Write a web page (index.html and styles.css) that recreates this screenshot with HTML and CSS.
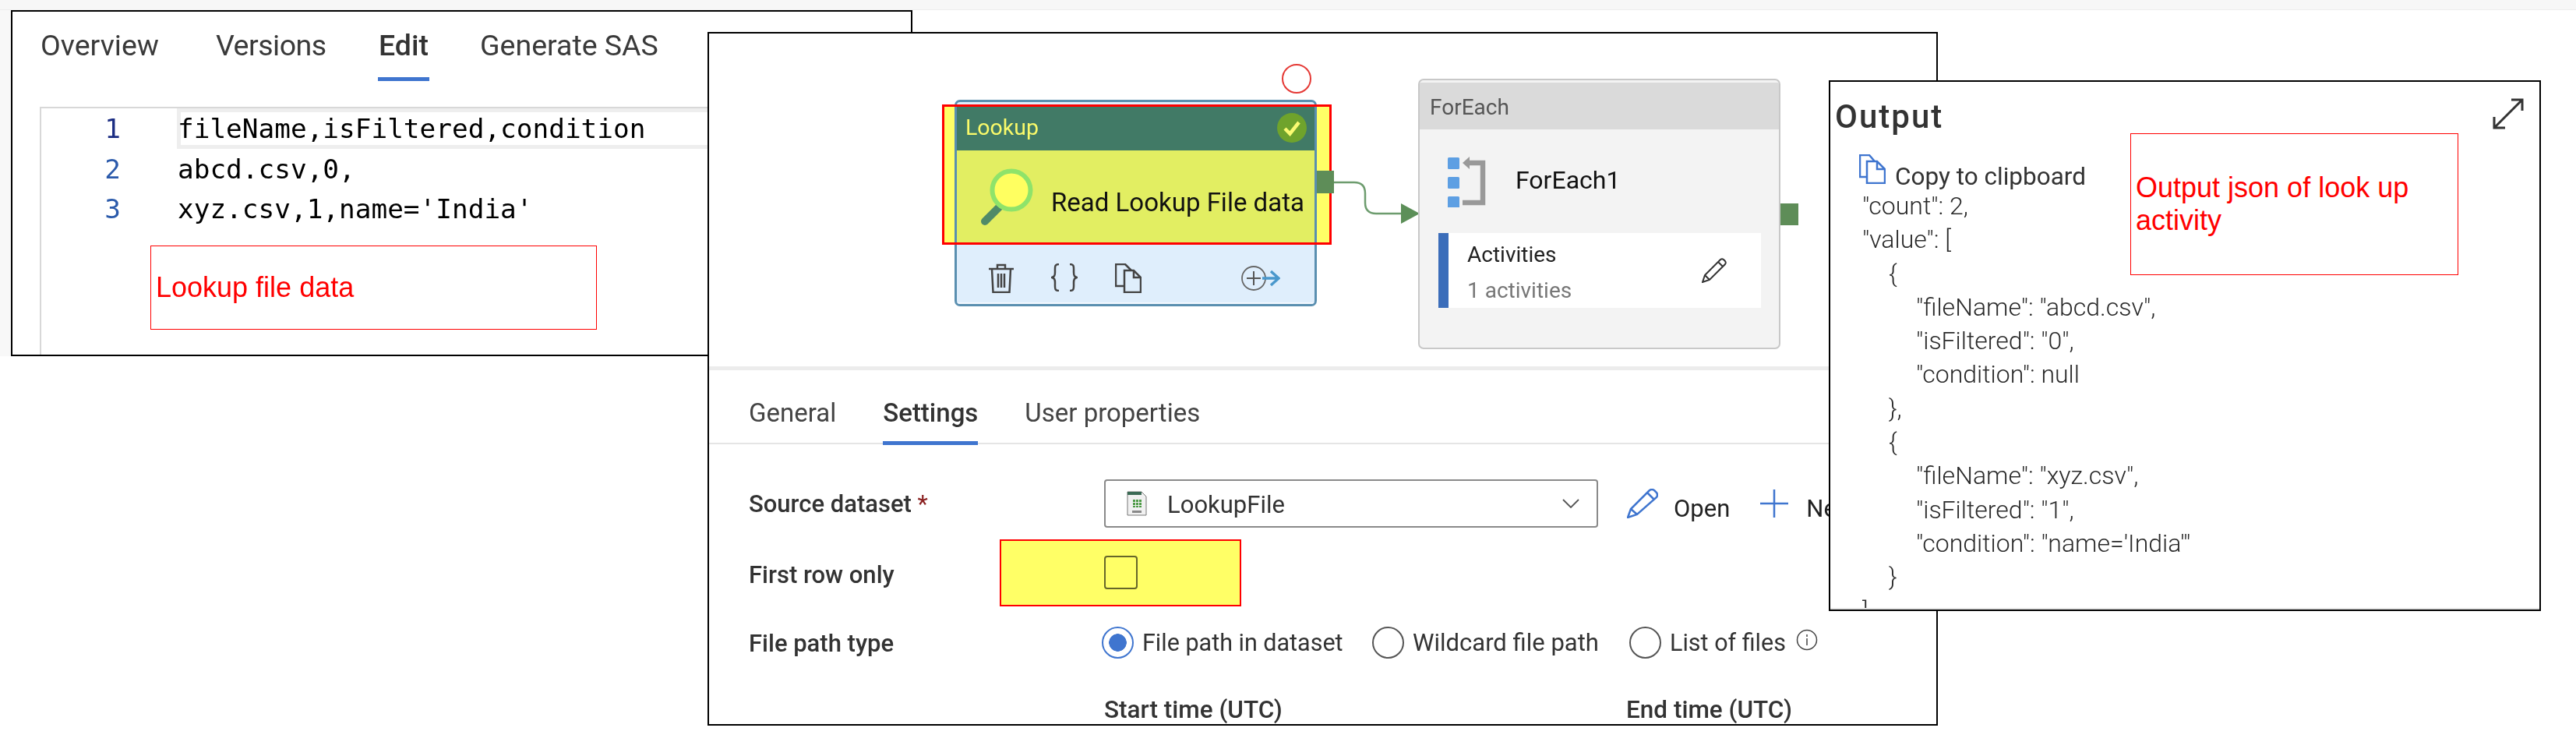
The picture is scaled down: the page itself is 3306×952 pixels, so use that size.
FILE: index.html
```html
<!DOCTYPE html>
<html lang="en">
<head>
<meta charset="utf-8">
<title>Lookup activity</title>
<link rel="stylesheet" href="styles.css">
</head>
<body>
<div class="page">
  <div class="topbar"></div>
  <div class="leftbar"></div>

  <section class="win win-file">
    <nav class="file-tabs">
      <span class="ftab ftab-a">Overview</span>
      <span class="ftab ftab-b">Versions</span>
      <span class="ftab ftab-on">Edit</span>
      <span class="ftab">Generate SAS</span>
    </nav>
    <div class="editor">
      <div class="line"><span class="num num-cur">1</span><span class="code code-cur">fileName,isFiltered,condition</span></div>
      <div class="line"><span class="num">2</span><span class="code">abcd.csv,0,</span></div>
      <div class="line"><span class="num">3</span><span class="code">xyz.csv,1,name='India'</span></div>
    </div>
  </section>
  <div class="note note-file">Lookup file data</div>

  <section class="win win-main">
    <div class="canvas">
      <div class="hl-fill"></div>
      <div class="ring"></div>

      <div class="node node-lookup">
        <div class="nl-strip"></div>
        <div class="nl-head">
          <span>Lookup</span>
          <svg class="nl-check" viewBox="0 0 38 38"><circle cx="19" cy="19" r="19" fill="#6fa32c"/><path d="M10 20l6.500 6.500L28 12" fill="none" stroke="#fbfb72" stroke-width="4.500"/></svg>
        </div>
        <div class="nl-body">
          <svg class="nl-glass" viewBox="0 0 72 76"><path d="M28 49L8 69" stroke="#4f8a68" stroke-width="10" stroke-linecap="round"/><circle cx="42" cy="29" r="24.500" fill="#ffff60" stroke="#8fe36a" stroke-width="6"/></svg>
          <span class="nl-name">Read Lookup File data</span>
        </div>
        <div class="nl-foot">
          <svg class="ic-trash" viewBox="0 0 32 38" fill="none" stroke="#444" stroke-width="2.500"><path d="M0 7h32M11 7V2h10v5M4 7l1.500 30h21L28 7M12 13v18M16 13v18M20 13v18"/></svg>
          <svg class="ic-brace" viewBox="0 0 34 36" fill="none" stroke="#444" stroke-width="2.500"><path d="M10 1C4 1 5 5 5 11c0 5-1 6-4 7 3 1 4 2 4 7 0 6-1 10 5 10M24 1c6 0 5 4 5 10 0 5 1 6 4 7-3 1-4 2-4 7 0 6 1 10-5 10"/></svg>
          <svg class="ic-copy" viewBox="0 0 34 38" fill="none" stroke="#444" stroke-width="2.500"><path d="M12 29H1V1h12l8 8M12 9h12l9 9v19H12zM24 9v9h9" /></svg>
          <svg class="ic-add" viewBox="0 0 50 32" fill="none"><circle cx="16" cy="16" r="15" stroke="#666" stroke-width="1.800"/><path d="M7 16h18M16 7v18" stroke="#555" stroke-width="2"/><path d="M27 16h20M38 7l10 9-10 9" stroke="#4a98cc" stroke-width="3.500"/></svg>
        </div>
      </div>
      <div class="hl-frame"></div>
      <div class="port port-a"></div>

      <svg class="wire" viewBox="0 0 112 60" fill="none"><path d="M0 3h26q14 0 14 14v12q0 14 14 14h36" stroke="#6d9c6e" stroke-width="2.500"/><path d="M86 30l24 13-24 13z" fill="#5c8f58"/></svg>

      <div class="node node-each">
        <div class="ne-head">ForEach</div>
        <div class="ne-main">
          <svg class="ne-loop" viewBox="0 0 50 66" fill="none"><rect x="0" y="2" width="15" height="15" rx="1.500" fill="#5d9fe3"/><rect x="0" y="27" width="15" height="15" rx="1.500" fill="#5d9fe3"/><rect x="0" y="52" width="15" height="15" rx="1.500" fill="#5d9fe3"/><path d="M26 9h19v51H19" stroke="#999" stroke-width="6.500"/><path d="M19 9l9-8v16z" fill="#999"/></svg>
          <span class="ne-name">ForEach1</span>
        </div>
        <div class="ne-box">
          <div class="ne-text">
            <div class="ne-t1">Activities</div>
            <div class="ne-t2">1 activities</div>
          </div>
          <svg class="ne-pen" viewBox="0 0 32 32" fill="none" stroke="#333" stroke-width="2"><path d="M1 31l3-9L24 2q2-1.500 4 0l2 2q1.500 2 0 4L10 28zM4 22l6 6M21 5l6 6"/></svg>
        </div>
      </div>
      <div class="port port-b"></div>
    </div>

    <div class="band"></div>

    <nav class="main-tabs">
      <span class="mtab">General</span>
      <span class="mtab mtab-on">Settings</span>
      <span class="mtab">User properties</span>
    </nav>

    <div class="form">
      <div class="row row-source">
        <label class="lab">Source dataset <span class="star">*</span></label>
        <div class="select">
          <svg class="csv" viewBox="0 0 26 32"><path d="M1 1h18l6 6v24H1z" fill="#f1f1f1" stroke="#777"/><path d="M1 1h18v4H1z" fill="#3b6a55"/><path d="M8 11h3v3H8zm4 0h3v3h-3zm4 0h3v3h-3zM8 15h3v3H8zm4 0h3v3h-3zm4 0h3v3h-3zM8 19h3v2H8zm4 0h3v2h-3zm4 0h3v2h-3z" fill="#4c9a45"/><path d="M7 25h12v3H7z" fill="#888"/></svg>
          <span class="sel-text">LookupFile</span>
          <svg class="chev" viewBox="0 0 22 12" fill="none" stroke="#555" stroke-width="1.800"><path d="M1 1l10 10L21 1"/></svg>
        </div>
        <svg class="pen-blue" viewBox="0 0 40 38" fill="none" stroke="#3f75cf" stroke-width="2.500"><path d="M1 37l4-11L29 2q3-2 6 0l3 3q2 3 0 6L13 33zM5 26l8 7M26 5l9 9"/></svg>
        <span class="act act-open">Open</span>
        <svg class="plus" viewBox="0 0 36 36" stroke="#3f75cf" stroke-width="2.500"><path d="M0 18h36M18 0v36"/></svg>
        <span class="act">New</span>
      </div>
      <div class="row row-first">
        <label class="lab">First row only</label>
        <span class="check"></span>
      </div>
      <div class="row row-path">
        <label class="lab lab-path">File path type</label>
        <span class="radio radio-on"></span><span class="rlab rlab-a">File path in dataset</span>
        <span class="radio"></span><span class="rlab rlab-b">Wildcard file path</span>
        <span class="radio"></span><span class="rlab rlab-c">List of files</span>
        <svg class="info" viewBox="0 0 28 28" fill="none" stroke="#444" stroke-width="1.500"><circle cx="14" cy="14" r="12.500"/><path d="M14 12v9M14 7v3"/></svg>
      </div>
      <div class="row row-time">
        <span class="time time-start">Start time (UTC)</span>
        <span class="time">End time (UTC)</span>
      </div>
    </div>
  </section>
  <div class="hl-check"></div>

  <section class="win win-out">
    <h2 class="out-title">Output</h2>
    <svg class="expand" viewBox="0 0 40 40" fill="none" stroke="#333" stroke-width="3"><path d="M3 37L37 3M24 2h14v14M2 24v14h14"/></svg>
    <div class="copy-row">
      <svg class="copy-blue" viewBox="0 0 34 38" fill="none" stroke="#3f75cf" stroke-width="2.500"><path d="M10 29H1V1h12l7 8M10 9h13l10 10v18H10zM23 9v10h10"/></svg>
      <span class="copy-text">Copy to clipboard</span>
    </div>
    <div class="json">
      <div class="j j0">"count": 2,</div>
      <div class="j j0">"value": [</div>
      <div class="j j1">{</div>
      <div class="j j2">"fileName": "abcd.csv",</div>
      <div class="j j2">"isFiltered": "0",</div>
      <div class="j j2">"condition": null</div>
      <div class="j j1">},</div>
      <div class="j j1">{</div>
      <div class="j j2">"fileName": "xyz.csv",</div>
      <div class="j j2">"isFiltered": "1",</div>
      <div class="j j2">"condition": "name='India'"</div>
      <div class="j j1">}</div>
      <div class="j j0">]</div>
    </div>
    <div class="out-edge"></div>
  </section>
  <div class="note note-out">Output json of look up activity</div>
</div>
</body>
</html>
```

FILE: styles.css
```css
* { box-sizing: border-box; }
html, body { margin: 0; padding: 0; background: #fff; }
body { font-family: Roboto, "Noto Sans", sans-serif; color: #333; }
.page { position: relative; width: 3306px; height: 952px; overflow: hidden; background: #fff; }
.topbar { height: 13px; background: #f7f7f7; border-bottom: 1px solid #eee; }
.leftbar { position: absolute; left: 0; top: 13px; width: 14px; height: 444px; background: #f8f8f8; }

.win { position: absolute; background: #fff; border: 2px solid #000; overflow: hidden; }
.win-file { left: 14px; top: 13px; width: 1157px; height: 444px; }
.win-main { left: 908px; top: 41px; width: 1579px; height: 890px; }
.win-out { left: 2347px; top: 103px; width: 914px; height: 681px; display: flex; flex-direction: column; }

.note { position: absolute; background: #fff; border: 1px solid #f00; color: #f00; font: 36px/42px "Liberation Sans", Arial, sans-serif; display: flex; align-items: center; padding: 0 6px; }
.note-file { left: 193px; top: 315px; width: 573px; height: 108px; }
.note-out { left: 2734px; top: 171px; width: 421px; height: 182px; }

/* left window */
.file-tabs { display: flex; height: 89px; margin-bottom: 33px; padding-left: 36px; font-size: 37.500px; }
.ftab { padding-top: 21px; line-height: 44px; color: #3a3a3a; white-space: nowrap; }
.ftab-a { width: 225px; }
.ftab-b { width: 208px; letter-spacing: -0.500px; }
.ftab-on { width: 66px; margin-right: 65px; text-align: center; font-weight: 500; color: #333; border-bottom: 5px solid #3f75cf; }
.editor { margin-left: 35px; height: 320px; border-left: 2px solid #d8d8d8; border-top: 2px solid #d8d8d8; font: 34.400px "DejaVu Sans Mono", "Liberation Mono", monospace; color: #000; }
.line { display: flex; height: 51.500px; }
.num { width: 102px; text-align: right; padding-top: 4px; line-height: 45px; color: #2b5aab; }
.num-cur { color: #1b2d83; }
.code { flex: 1; margin-left: 72px; padding: 4px 0 0 1px; line-height: 45px; white-space: pre; }
.code-cur { box-shadow: inset 0 0 0 5px #eee; }

/* main window */
.canvas { position: relative; height: 427px; }
.band { height: 5px; background: #ececec; }
.ring { position: absolute; left: 735px; top: 39px; width: 38px; height: 38px; border: 2px solid #e53935; border-radius: 50%; }
.node { position: absolute; border-radius: 7px; overflow: hidden; }
.node-lookup { left: 315px; top: 85px; width: 465px; height: 265px; border: 3px solid #5a8fb0; background: #dfeefc; display: flex; flex-direction: column; }
.nl-strip { height: 3px; }
.nl-head { height: 59px; background: #417a66; color: #fafa6a; font-size: 28.500px; display: flex; align-items: center; justify-content: space-between; padding: 0 10px 0 11px; }
.nl-check { width: 38px; height: 38px; }
.nl-body { height: 120px; background: #e2ee62; display: flex; align-items: center; padding-left: 28px; gap: 21px; color: #111; }
.nl-glass { width: 72px; height: 76px; }
.nl-name { font-size: 33px; padding-top: 12px; }
.nl-foot { height: 77px; display: flex; align-items: flex-start; padding: 25px 44px 0 41px; border-bottom: 2px solid #f4f9ff; }
.ic-trash { width: 32px; height: 38px; }
.ic-brace { width: 34px; height: 36px; margin-left: 48px; }
.ic-copy { width: 34px; height: 38px; margin-left: 48px; }
.ic-add { width: 50px; height: 32px; margin-left: auto; margin-top: 3px; }
.hl-fill, .hl-frame { position: absolute; left: 299px; top: 91px; width: 500px; height: 180px; }
.hl-fill { background: #ffff66; }
.hl-frame { border: 3px solid #f00; }
.port { position: absolute; background: #5e8d58; }
.port-a { left: 780px; top: 176px; width: 22px; height: 29px; }
.port-b { left: 1375px; top: 218px; width: 23px; height: 28px; }
.wire { position: absolute; left: 802px; top: 188px; width: 112px; height: 60px; }
.node-each { left: 910px; top: 58px; width: 465px; height: 347px; border: 2.500px solid #c8c8c8; background: #f3f3f3; padding-top: 3px; }
.ne-head { height: 60px; background: #dadada; color: #555; font-size: 28px; line-height: 63px; padding-left: 13px; }
.ne-main { height: 133px; display: flex; padding: 34px 0 0 36px; color: #111; }
.ne-loop { width: 50px; height: 66px; }
.ne-name { margin-left: 37px; font-size: 32px; line-height: 38px; padding-top: 12px; }
.ne-box { margin: 0 23px 0 24px; height: 96px; background: #fff; border-left: 13px solid #3b6dba; display: flex; justify-content: space-between; padding: 0 44px 0 24px; }
.ne-t1 { font-size: 28px; line-height: 36px; padding-top: 10px; color: #222; }
.ne-t2 { font-size: 28px; line-height: 36px; padding-top: 10px; color: #777; }
.ne-pen { width: 32px; height: 32px; margin-top: 32px; }

.main-tabs { display: flex; height: 95px; border-bottom: 2px solid #e5e5e5; padding-left: 51px; font-size: 33px; gap: 60px; }
.mtab { height: 96px; padding-top: 36px; line-height: 38px; color: #444; }
.mtab-on { font-weight: 500; color: #333; border-bottom: 5px solid #3f75cf; }

.form { padding: 31px 0 0 51px; font-size: 31px; }
.row { display: flex; align-items: center; }
.row-source { height: 90px; }
.row-first { height: 86px; }
.row-first .lab { padding-top: 6px; }
.row-path { height: 94px; }
.row-path .lab { padding-top: 2px; }
.row-time { height: 78px; padding-left: 456px; font-weight: 500; font-size: 31.500px; }
.lab { width: 456px; font-weight: 500; color: #333; }
.lab-path { width: 453px; }
.star { color: #8a2020; font-weight: 400; }
.select { width: 634px; height: 62px; border: 2px solid #8a8a8a; border-radius: 4px; display: flex; align-items: center; padding: 0 22px 0 27px; }
.csv { width: 26px; height: 32px; }
.sel-text { margin-left: 26px; flex: 1; color: #333; padding-top: 2px; }
.chev { width: 22px; height: 12px; }
.pen-blue { width: 40px; height: 38px; margin-left: 37px; }
.act { color: #222; padding-top: 12px; }
.act-open { margin-left: 20px; }
.plus { width: 36px; height: 36px; margin: 0 23px 0 39px; }
.check { width: 43px; height: 43px; border: 2px solid #666; border-radius: 4px; }
.radio { width: 41px; height: 41px; border: 2px solid #555; border-radius: 50%; flex: none; }
.radio-on { border-color: #3f75cf; background: radial-gradient(circle, #3f75cf 0 11px, #fff 11.500px); }
.rlab { margin-left: 11px; color: #333; white-space: nowrap; }
.rlab-a { width: 258px; margin-right: 37px; font-size: 30.500px; }
.rlab-b { width: 242px; margin-right: 36px; }
.rlab-c { font-size: 30.500px; }
.info { width: 28px; height: 28px; margin: -6px 0 0 13px; }
.time-start { width: 670px; }
.time { color: #333; }
.hl-check { position: absolute; left: 1283px; top: 692px; width: 310px; height: 86px; background: #ffff66; border: 2.500px solid #f00; mix-blend-mode: multiply; }

/* output window */
.out-title { margin: 0; padding: 17px 0 0 6px; height: 91px; font-size: 42px; font-weight: 500; line-height: 56px; letter-spacing: 2px; color: #333; }
.expand { position: absolute; left: 850px; top: 21px; width: 40px; height: 40px; }
.copy-row { display: flex; align-items: flex-start; height: 47px; padding-left: 37px; font-size: 31.500px; line-height: 36px; flex: none; }
.copy-blue { width: 34px; height: 38px; margin: 2px 12px 0 0; }
.copy-text { margin-top: 13px; white-space: nowrap; }
.json { flex: 1; min-height: 0; overflow: hidden; font-size: 32px; font-weight: 300; color: #2a2a2a; line-height: 43.300px; }
.j { white-space: pre; }
.j0 { padding-left: 41px; }
.j1 { padding-left: 75px; }
.j2 { padding-left: 110px; }
.out-edge { height: 2px; background: #e3e3e3; flex: none; }
```
